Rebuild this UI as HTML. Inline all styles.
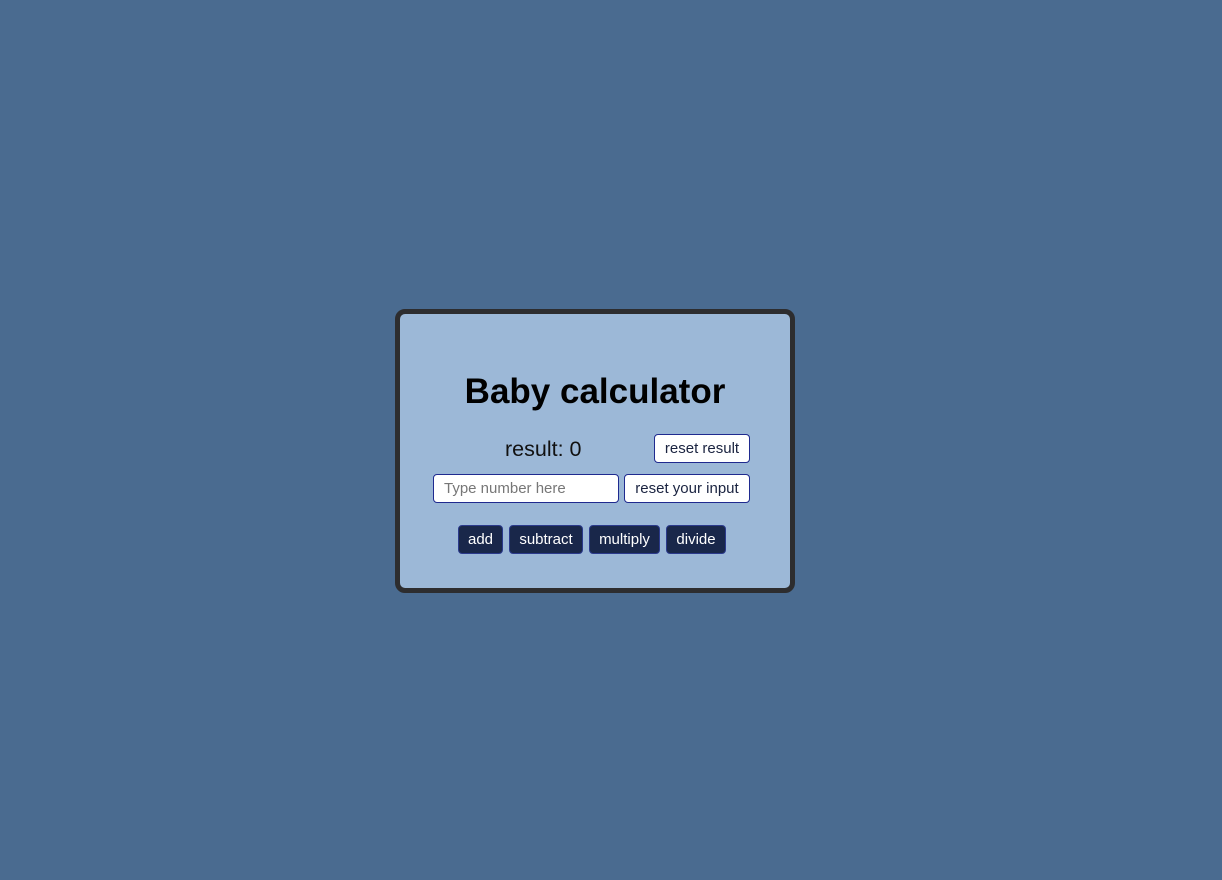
<!DOCTYPE html>
<html><head><style>
body{margin:0;width:1222px;height:880px;background:#4a6b90;font-family:"Liberation Sans",Arial,sans-serif;position:relative;overflow:hidden}
.card{position:absolute;left:395px;top:309px;width:390px;height:274px;border:5px solid #2d2d2f;border-radius:10px;background:#9cb8d7}
.a{position:absolute;box-sizing:border-box}
h1{position:absolute;top:371px;margin:0;text-align:center;font-size:35px;font-weight:bold;color:#000;line-height:42px}
.w{background:#fff;border:1px solid #1f2a8f;border-radius:4px;color:#1a2340;font-size:15px;text-align:center;line-height:28px}
.d{background:#19274a;border:1px solid #2b3a8c;border-radius:4px;color:#fff;font-size:15px;text-align:center;line-height:28px;top:525px;height:29px}
</style></head><body>
<div class="card"></div>
<h1 style="left:395px;width:400px">Baby calculator</h1>
<div class="a" style="left:505px;top:436px;font-size:21.5px;line-height:26px;color:#111">result: 0</div>
<div class="a w" style="left:654px;top:434px;width:96px;height:29px">reset result</div>
<div class="a w" style="left:433px;top:474px;width:186px;height:29px;text-align:left;padding-left:10px;color:#777">Type number here</div>
<div class="a w" style="left:624px;top:474px;width:126px;height:29px">reset your input</div>
<div class="a d" style="left:458px;width:45px">add</div>
<div class="a d" style="left:509px;width:74px">subtract</div>
<div class="a d" style="left:589px;width:71px">multiply</div>
<div class="a d" style="left:666px;width:60px">divide</div>
</body></html>
